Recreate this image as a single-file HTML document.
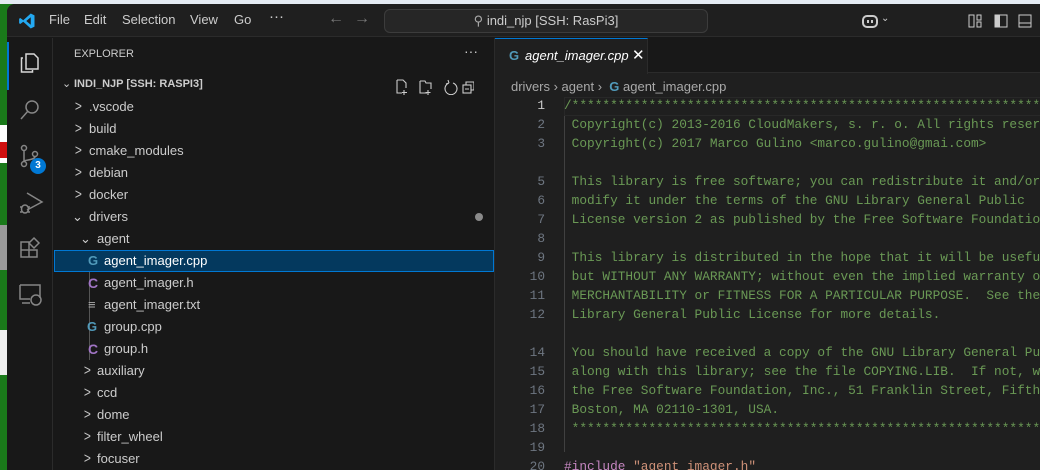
<!DOCTYPE html>
<html><head><meta charset="utf-8"><style>
*{margin:0;padding:0;box-sizing:border-box}
body{width:1040px;height:470px;overflow:hidden;background:#1a7a1a;font-family:"Segoe UI","Liberation Sans",sans-serif;position:relative}
.abs{position:absolute}
.top{left:0;top:0;width:1040px;height:4px;background:#e4ebf3}
.win{left:7px;top:4px;width:1033px;height:466px;background:#181818;border-top-left-radius:8px;overflow:hidden}
.title{left:0;top:0;width:1033px;height:33px;background:#1f1f1f;border-bottom:1px solid #2b2b2b;color:#cccccc;font-size:13px}
.menu{top:8px}
.search{left:377px;top:5px;width:324px;height:24px;border:1px solid #3c3c3c;border-radius:6px;background:#262626;color:#cccccc;font-size:13px;text-align:center;line-height:22px}
.act{left:0;top:34px;width:46px;height:432px;background:#181818;border-right:1px solid #2b2b2b}
.side{left:47px;top:34px;width:440px;height:432px;background:#181818;color:#cccccc;font-size:13px}
.row{position:absolute;left:0;width:440px;height:22px;line-height:22px}
.ch{font-size:15px;color:#c5c5c5;transform:scaleX(0.8)}
.ed{left:487px;top:34px;width:546px;height:432px;background:#1f1f1f;border-left:1px solid #2b2b2b}
.tabs{left:0;top:0;width:546px;height:35px;background:#181818;border-bottom:1px solid #2b2b2b}
.tab{left:0;top:0;width:153px;height:36px;background:#1f1f1f;border-top:1px solid #0078d4;border-right:1px solid #2b2b2b;color:#fff;font-style:italic;font-size:13px}
.ln{position:absolute;left:0;width:50px;text-align:right;color:#6e7681;font-family:"Liberation Mono",monospace;font-size:12.8px}
.cl{position:absolute;left:69px;color:#6a9955;font-family:"Liberation Mono",monospace;font-size:12.8px;white-space:pre}
.cpp{color:#519aba;font-weight:bold;font-size:13px}
.hh{color:#a074c4;font-weight:bold;font-size:14px}
</style></head><body>
<div class="abs top"></div>
<div class="abs" style="left:0;top:125px;width:7px;height:38px;background:#fff"></div>
<div class="abs" style="left:0;top:142px;width:7px;height:16px;background:#d01010"></div>
<div class="abs" style="left:0;top:225px;width:7px;height:45px;background:#999"></div>
<div class="abs" style="left:0;top:330px;width:7px;height:45px;background:#eee"></div>
<div class="abs win">
 <div class="abs title">
  <svg class="abs" style="left:11px;top:8px" width="18" height="18" viewBox="0 0 24 24"><path d="M17 2 L22 4.5 V19.5 L17 22 L7 13 L3 16 L1.5 15 V9 L3 8 L7 11 Z M17 7 L11 12 L17 17 Z" fill="#23a9f2"/></svg>
  <span class="abs menu" style="left:42px">File</span>
  <span class="abs menu" style="left:77px">Edit</span>
  <span class="abs menu" style="left:115px">Selection</span>
  <span class="abs menu" style="left:183px">View</span>
  <span class="abs menu" style="left:227px">Go</span>
  <span class="abs menu" style="left:262px;top:4px;font-size:15px">···</span>
  <span class="abs" style="left:321px;top:6px;color:#777;font-size:16px">←</span>
  <span class="abs" style="left:347px;top:6px;color:#777;font-size:16px">→</span>
  <div class="abs search"><span style="color:#aaa">⚲</span> indi_njp [SSH: RasPi3]</div>
  <svg class="abs" style="left:854px;top:9px" width="18" height="16" viewBox="0 0 18 16"><rect x="2" y="3" width="14" height="11" rx="4" fill="none" stroke="#ccc" stroke-width="2"/><rect x="6" y="7" width="2" height="3" fill="#ccc"/><rect x="10" y="7" width="2" height="3" fill="#ccc"/></svg>
  <span class="abs" style="left:874px;top:9px;font-size:10px">⌄</span>
  <svg class="abs" style="left:961px;top:10px" width="14" height="14"><rect x="1" y="1" width="5" height="12" fill="none" stroke="#ccc"/><rect x="9" y="1" width="4" height="5" fill="none" stroke="#ccc"/><rect x="9" y="8" width="4" height="5" fill="none" stroke="#ccc"/></svg>
  <svg class="abs" style="left:987px;top:10px" width="14" height="14"><rect x="1" y="1" width="12" height="12" fill="none" stroke="#ccc"/><rect x="1" y="1" width="5" height="12" fill="#ccc"/></svg>
  <svg class="abs" style="left:1011px;top:10px" width="14" height="14"><rect x="1" y="1" width="12" height="12" fill="none" stroke="#ccc"/><line x1="1" y1="9" x2="13" y2="9" stroke="#ccc"/></svg>
 </div>
 <div class="abs act">
  <div class="abs" style="left:0;top:4px;width:2px;height:48px;background:#0078d4"></div>
  <svg class="abs" style="left:11px;top:13px" width="24" height="24" viewBox="0 0 24 24" fill="none" stroke="#d7d7d7" stroke-width="1.5"><path d="M8 3h8l4 4v11H8z M5 7H3.5v14h11v-2"/></svg>
  <svg class="abs" style="left:11px;top:60px" width="24" height="24" viewBox="0 0 24 24" fill="none" stroke="#868686" stroke-width="1.5"><circle cx="14" cy="9" r="6"/><path d="M10 13L3 21"/></svg>
  <svg class="abs" style="left:11px;top:106px" width="24" height="24" viewBox="0 0 24 24" fill="none" stroke="#868686" stroke-width="1.5"><circle cx="6" cy="4" r="2.5"/><circle cx="6" cy="20" r="2.5"/><circle cx="17" cy="10" r="2.5"/><path d="M6 6.5v11M17 12.5c0 4-11 3-11 5"/></svg>
  <div class="abs" style="left:23px;top:120px;width:16px;height:16px;border-radius:8px;background:#0078d4;color:#fff;font-size:10px;font-weight:bold;text-align:center;line-height:16px">3</div>
  <svg class="abs" style="left:11px;top:152px" width="26" height="26" viewBox="0 0 26 26" fill="none" stroke="#868686" stroke-width="1.5"><path d="M9 3l15 9-15 8"/><ellipse cx="7" cy="19" rx="3.5" ry="4"/><path d="M2 17h2M10 17h2M2 22h2M10 22h2"/></svg>
  <svg class="abs" style="left:11px;top:198px" width="24" height="24" viewBox="0 0 24 24" fill="none" stroke="#868686" stroke-width="1.5"><path d="M3 6h8v15H3zM3 14h16v7h-8M16 2l5 5-5 5-5-5z"/></svg>
  <svg class="abs" style="left:11px;top:244px" width="26" height="24" viewBox="0 0 26 24" fill="none" stroke="#868686" stroke-width="1.5"><path d="M2 3h20v13M2 3v14h10M4 21h8"/><circle cx="18" cy="18" r="5"/></svg>
 </div>
 <div class="abs side">
  <span class="abs" style="left:20px;top:10px;font-size:11px">EXPLORER</span>
  <span class="abs" style="left:410px;top:5px;font-size:14px">···</span>
  <div class="row" style="top:35px;font-size:11px;font-weight:bold"><span style="position:absolute;left:8px;font-weight:normal">⌄</span><span style="position:absolute;left:20px">INDI_NJP [SSH: RASPI3]</span></div>
  <svg class="abs" style="left:340px;top:41px" width="80" height="16" fill="none" stroke="#ccc" stroke-width="1.1"><path d="M3 1h6l3 3v5M3 1v13h5M10 11v5M8 13.5h5"/><path d="M26 2h5l1 2h5v6M26 2v12h7M34 11v5M31.5 13.5h5"/><path d="M55 4a6 6 0 1 0 4 0M55 4l-1-3M55 4l-3 1"/><rect x="69" y="6" width="8" height="8"/><path d="M72 6V3h8v8h-3M71 10h4"/></svg>
  <div class="row" style="top:58px"><span class="abs ch" style="left:20px">&gt;</span><span class="abs" style="left:35px">.vscode</span></div>
  <div class="row" style="top:80px"><span class="abs ch" style="left:20px">&gt;</span><span class="abs" style="left:35px">build</span></div>
  <div class="row" style="top:102px"><span class="abs ch" style="left:20px">&gt;</span><span class="abs" style="left:35px">cmake_modules</span></div>
  <div class="row" style="top:124px"><span class="abs ch" style="left:20px">&gt;</span><span class="abs" style="left:35px">debian</span></div>
  <div class="row" style="top:146px"><span class="abs ch" style="left:20px">&gt;</span><span class="abs" style="left:35px">docker</span></div>
  <div class="row" style="top:168px"><span class="abs" style="left:18px">⌄</span><span class="abs" style="left:35px">drivers</span><span class="abs" style="left:421px;top:7px;width:8px;height:8px;border-radius:4px;background:#8a8a8a"></span></div>
  <div class="row" style="top:190px"><span class="abs" style="left:26px">⌄</span><span class="abs" style="left:43px">agent</span></div>
  <div class="abs" style="left:35px;top:212px;width:1px;height:110px;background:#555"></div>
  <div class="row" style="top:212px;background:#04395e;border:1px solid #0078d4;color:#fff;line-height:20px"><span class="abs cpp" style="left:33px">G</span><span class="abs" style="left:49px">agent_imager.cpp</span></div>
  <div class="row" style="top:234px"><span class="abs hh" style="left:34px">C</span><span class="abs" style="left:50px">agent_imager.h</span></div>
  <div class="row" style="top:256px"><span class="abs" style="left:34px;color:#aaa">≡</span><span class="abs" style="left:50px">agent_imager.txt</span></div>
  <div class="row" style="top:278px"><span class="abs cpp" style="left:33px">G</span><span class="abs" style="left:50px">group.cpp</span></div>
  <div class="row" style="top:300px"><span class="abs hh" style="left:34px">C</span><span class="abs" style="left:50px">group.h</span></div>
  <div class="row" style="top:322px"><span class="abs ch" style="left:29px">&gt;</span><span class="abs" style="left:43px">auxiliary</span></div>
  <div class="row" style="top:344px"><span class="abs ch" style="left:29px">&gt;</span><span class="abs" style="left:43px">ccd</span></div>
  <div class="row" style="top:366px"><span class="abs ch" style="left:29px">&gt;</span><span class="abs" style="left:43px">dome</span></div>
  <div class="row" style="top:388px"><span class="abs ch" style="left:29px">&gt;</span><span class="abs" style="left:43px">filter_wheel</span></div>
  <div class="row" style="top:410px"><span class="abs ch" style="left:29px">&gt;</span><span class="abs" style="left:43px">focuser</span></div>
 </div>
 <div class="abs ed">
  <div class="abs tabs"></div>
  <div class="abs tab"><span class="abs cpp" style="left:14px;top:9px;font-style:normal">G</span><span class="abs" style="left:30px;top:9px">agent_imager.cpp</span><span class="abs" style="left:137px;top:7px;font-style:normal;font-size:15px">✕</span></div>
  <div class="abs" style="left:16px;top:41px;color:#a9a9a9;font-size:13px;white-space:pre">drivers › agent ›  <span class="cpp">G</span> agent_imager.cpp</div>
  <div class="abs" style="left:69px;top:59px;width:477px;height:19px;border:1px solid #282828"></div>
  <div class="abs" style="left:69px;top:78px;width:1px;height:336px;background:#404040"></div>
  <div class="abs" style="left:0;top:60px;width:546px">
<div class="ln" style="top:0;color:#ccc">1</div><div class="cl" style="top:0">/*****************************************************************</div>
<div class="ln" style="top:19px">2</div><div class="cl" style="top:19px"> Copyright(c) 2013-2016 CloudMakers, s. r. o. All rights reserved.</div>
<div class="ln" style="top:38px">3</div><div class="cl" style="top:38px"> Copyright(c) 2017 Marco Gulino &lt;marco.gulino@gmai.com&gt;</div>
<div class="ln" style="top:76px">5</div><div class="cl" style="top:76px"> This library is free software; you can redistribute it and/or</div>
<div class="ln" style="top:95px">6</div><div class="cl" style="top:95px"> modify it under the terms of the GNU Library General Public</div>
<div class="ln" style="top:114px">7</div><div class="cl" style="top:114px"> License version 2 as published by the Free Software Foundation.</div>
<div class="ln" style="top:133px">8</div>
<div class="ln" style="top:152px">9</div><div class="cl" style="top:152px"> This library is distributed in the hope that it will be useful,</div>
<div class="ln" style="top:171px">10</div><div class="cl" style="top:171px"> but WITHOUT ANY WARRANTY; without even the implied warranty of</div>
<div class="ln" style="top:190px">11</div><div class="cl" style="top:190px"> MERCHANTABILITY or FITNESS FOR A PARTICULAR PURPOSE.  See the GNU</div>
<div class="ln" style="top:209px">12</div><div class="cl" style="top:209px"> Library General Public License for more details.</div>
<div class="ln" style="top:247px">14</div><div class="cl" style="top:247px"> You should have received a copy of the GNU Library General Public</div>
<div class="ln" style="top:266px">15</div><div class="cl" style="top:266px"> along with this library; see the file COPYING.LIB.  If not, write to</div>
<div class="ln" style="top:285px">16</div><div class="cl" style="top:285px"> the Free Software Foundation, Inc., 51 Franklin Street, Fifth Floor,</div>
<div class="ln" style="top:304px">17</div><div class="cl" style="top:304px"> Boston, MA 02110-1301, USA.</div>
<div class="ln" style="top:323px">18</div><div class="cl" style="top:323px"> *****************************************************************</div>
<div class="ln" style="top:342px">19</div>
<div class="ln" style="top:361px">20</div><div class="cl" style="top:361px"><span style="color:#c586c0">#include</span> <span style="color:#ce9178">"agent_imager.h"</span></div>
  </div>
 </div>
</div>
</body></html>
